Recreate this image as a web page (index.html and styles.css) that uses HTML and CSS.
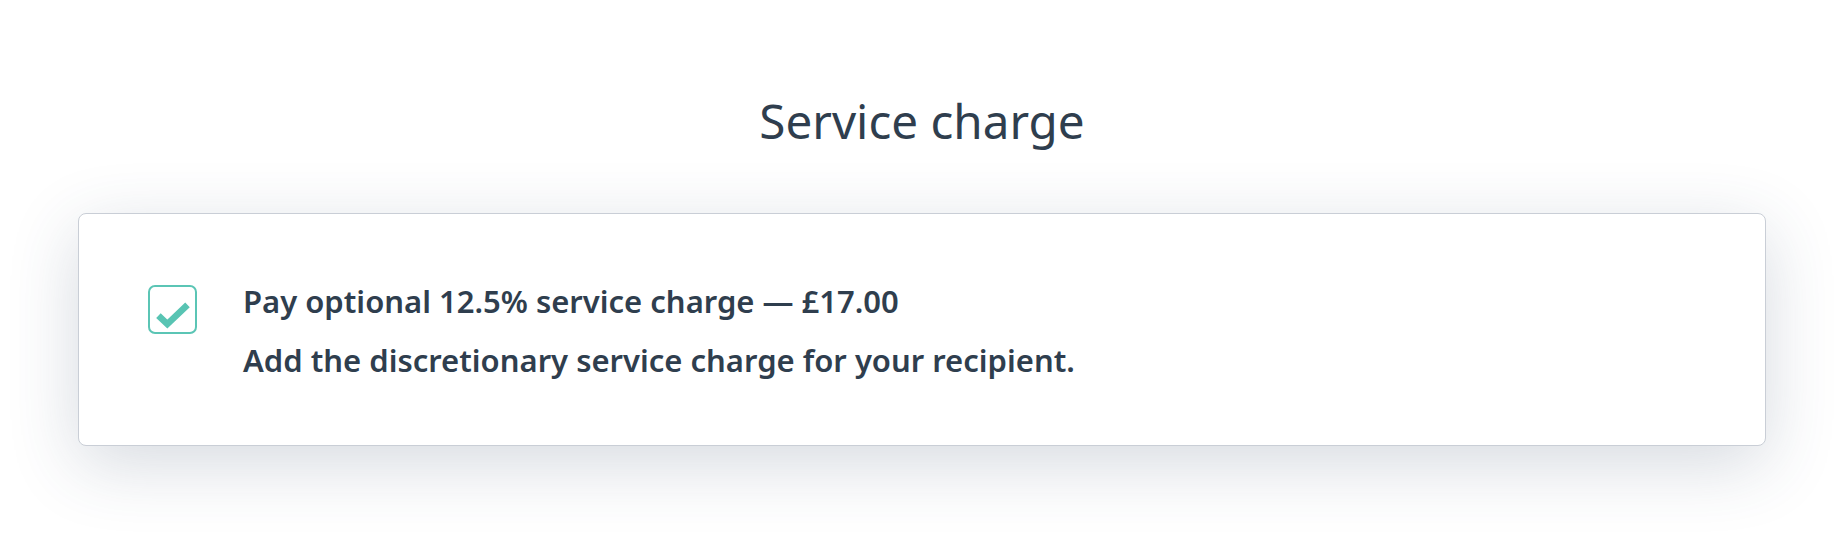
FILE: index.html
```html
<!DOCTYPE html>
<html lang="en">
<head>
<meta charset="utf-8">
<title>Service charge</title>
<link rel="stylesheet" href="styles.css">
</head>
<body>
<main class="page">
  <h1 class="title">Service charge</h1>
  <section class="card">
    <label class="option">
      <span class="checkbox">
        <svg viewBox="0 0 48 48" width="44" height="44" aria-hidden="true">
          <path d="M9 30.5 L18.5 39.5 L40 19" fill="none" stroke="#58c4b3" stroke-width="7" stroke-linejoin="miter" stroke-linecap="butt"/>
        </svg>
      </span>
      <span class="texts">
        <span class="line">Pay optional 12.5% service charge — £17.00</span>
        <span class="line">Add the discretionary service charge for your recipient.</span>
      </span>
    </label>
  </section>
</main>
</body>
</html>
```
FILE: styles.css
```css
html, body {
  margin: 0;
  padding: 0;
  background: #ffffff;
}
body {
  font-family: "Noto Sans", "Open Sans", "Liberation Sans", sans-serif;
  color: #2f3e4e;
}
.page {
  padding: 88px 77px 110px 78px;
}
.title {
  margin: 0;
  text-align: center;
  font-weight: 400;
  font-size: 47.6px;
  line-height: 66px;
  color: #2f3e4e;
}
.card {
  margin-top: 59px;
  background: #fff;
  border: 1px solid #c9ced6;
  border-radius: 8px;
  box-shadow: 0 18px 70px rgba(48, 70, 100, 0.2);
  padding: 67px 69px 65px;
}
.option {
  display: flex;
  align-items: flex-start;
  gap: 46px;
}
.checkbox {
  flex: 0 0 auto;
  width: 45px;
  height: 45px;
  margin-top: 4px;
  border: 2px solid #5bc5b5;
  border-radius: 7px;
  display: flex;
  align-items: center;
  justify-content: center;
}
.checkbox svg {
  display: block;
  width: 45px;
  height: 45px;
}
.texts {
  display: flex;
  flex-direction: column;
  gap: 19px;
}
.line {
  font-size: 31px;
  font-weight: 600;
  line-height: 40px;
  color: #2f3e4e;
}
```
